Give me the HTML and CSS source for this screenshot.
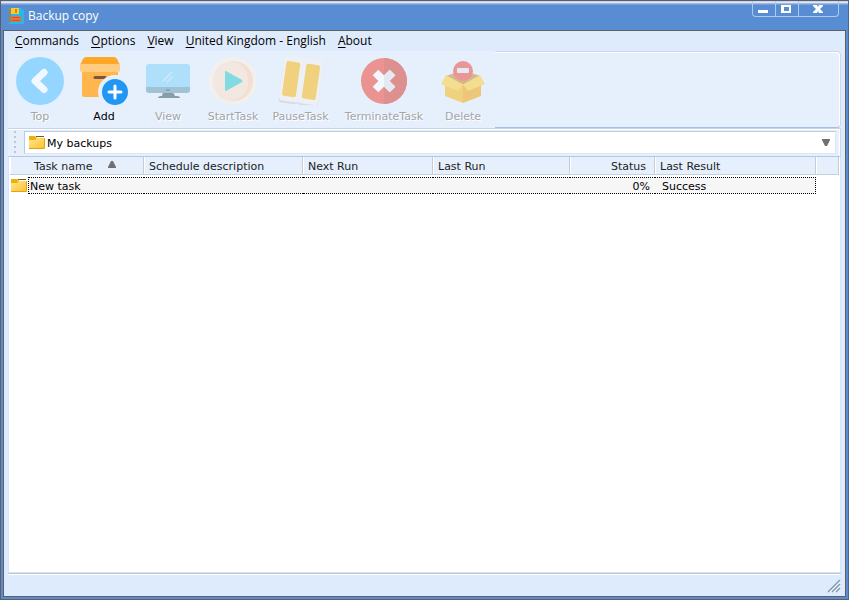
FILE: index.html
```html
<!DOCTYPE html>
<html lang="en">
<head>
<meta charset="utf-8">
<title>Backup copy</title>
<link rel="stylesheet" href="styles.css">
</head>
<body>
<div class="window">
  <header class="titlebar">
    <svg class="app-icon" viewBox="0 0 16 16" aria-hidden="true">
      <path fill="#27b9ee" d="M0 0h13l3 3v13H1l-1-1z"/>
      <path fill="#7b8b8c" d="M0 0h3v15H0z"/>
      <path fill="#ffca28" d="M3 0h8v6H3z"/>
      <path fill="#d18b1b" d="M7 1h2v4H7z"/>
      <path fill="#e8743b" d="M3 8h10v6H3z"/>
      <path fill="#b95d43" d="M4 9h8v1H4zM4 12h8v1H4z"/>
    </svg>
    <h1>Backup copy</h1>
    <div class="caption-buttons">
      <button type="button" aria-label="Minimize"><svg width="12" height="12" viewBox="0 0 12 12"><path fill="#fff" d="M1 8h10v3H1z"/></svg></button>
      <button type="button" aria-label="Maximize"><svg width="12" height="12" viewBox="0 0 12 12"><path fill="#fff" fill-rule="evenodd" d="M1 3h10v8H1zM4 5v4h5V5z"/></svg></button>
      <button type="button" class="close" aria-label="Close"><svg width="12" height="12" viewBox="0 0 12 12"><path fill="#fff" d="M1 3h4l1 2 1-2h4v1L8 7l3 3v1H7L6 9l-1 2H1v-1l3-3-3-3z"/></svg></button>
    </div>
  </header>

  <main class="client">
    <nav class="menu">
      <button type="button"><u>C</u>ommands</button>
      <button type="button"><u>O</u>ptions</button>
      <button type="button"><u>V</u>iew</button>
      <button type="button"><u>U</u>nited Kingdom - English</button>
      <button type="button"><u>A</u>bout</button>
    </nav>

    <div class="toolbar-row">
      <div class="toolbar">
        <button type="button" disabled>
          <svg viewBox="0 0 48 48"><circle cx="24" cy="24" r="24" fill="#94d6ff"/><path d="M28 15.500L19 24l9 8.500" fill="none" stroke="#f2f8ff" stroke-width="7" stroke-linecap="round" stroke-linejoin="round"/></svg>
          <span>Top</span>
        </button>
        <button type="button">
          <svg viewBox="0 0 48 48"><path fill="#ffb74d" d="M2 13h36v27H4q-2 0-2-2z"/><path fill="#ffa726" d="M6 0h28q2 0 3 2l3 6H0l3-6q1-2 3-2z"/><path fill="#ffcc80" d="M0 7h40v6q0 2-2 2H2q-2 0-2-2z"/><rect x="13.500" y="19" width="13" height="3" rx="1.500" fill="#795548"/><circle cx="35" cy="35" r="17" fill="#e6f0fd"/><circle cx="35" cy="35" r="13" fill="#2196f3"/><path d="M35 29v12M29 35h12" stroke="#fff" stroke-width="3" stroke-linecap="round"/></svg>
          <span>Add</span>
        </button>
        <button type="button" disabled>
          <svg viewBox="0 0 48 48"><path fill="#879da9" d="M19 35h10l2 4h2q3 0 3 2H14q0-2 3-2h1z"/><path fill="#a1c2d5" d="M2 28h44v5q0 3-3 3H5q-3 0-3-3z"/><path fill="#afe0fb" d="M5 7h38q3 0 3 3v20H2V10q0-3 3-3z"/><path d="M19 24l9-9M23 25l5-5" stroke="#cbeafd" stroke-width="1.500" stroke-linecap="round"/><rect x="22" y="32" width="4" height="2" rx="1" fill="#83a4b8"/></svg>
          <span>View</span>
        </button>
        <button type="button" disabled>
          <svg viewBox="0 0 48 48"><circle cx="24" cy="24" r="24" fill="#f1f0ef"/><circle cx="24" cy="24" r="20" fill="#f2dfce"/><path fill="#f2e8e1" d="M21 4.500a19.700 19.700 0 0 0 0 39q18-2 18-19.500t-18-19.500z"/><path fill="#82dae3" d="M16 15q0-1 1-1l16 9q1 1 0 2l-16 9q-1 0-1-1z"/></svg>
          <span>StartTask</span>
        </button>
        <button type="button" disabled>
          <svg viewBox="0 0 48 48"><g transform="rotate(8 24 24)"><path fill="#d4dce6" d="M7 3h13q3 0 4 2 1-2 3-2h14q3 0 3 3v38q0 4-4 4H27q-2 0-3-2-1 2-4 2H8q-4 0-4-4V6q0-3 3-3z"/><rect x="4" y="1" width="21" height="45" rx="4" fill="#edf1f6"/><rect x="23" y="1" width="21" height="45" rx="4" fill="#edf1f6"/><rect x="7" y="6" width="14" height="35" rx="2" fill="#f0d17e"/><rect x="27" y="6" width="14" height="35" rx="2" fill="#f0d17e"/></g></svg>
          <span>PauseTask</span>
        </button>
        <button type="button" disabled>
          <svg viewBox="0 0 48 48"><circle cx="24" cy="24" r="23" fill="#eb9390"/><path fill="#de908f" d="M24 1a23 23 0 0 1 0 46z"/><path d="M15.500 15.500l17 17M32.500 15.500l-17 17" stroke="#f3f8ff" stroke-width="8"/><path d="M24 24l8.500 8.500M32.500 15.500l-8.500 8.500" stroke="#e4eaf1" stroke-width="8"/><path fill="#f3f8ff" d="M18 24l6-5.700v11.400z"/></svg>
          <span>TerminateTask</span>
        </button>
        <button type="button" disabled>
          <svg viewBox="0 0 48 48"><path fill="#d7b68a" d="M7 19l17-6 17 6-17 9z"/><path fill="#f0d17e" d="M6 25l18 2v19L6 39z"/><path fill="#edc67a" d="M24 27l18-2v14l-18 7z"/><path fill="#f3dd91" d="M7 18l17 9.500-5 6.500-17-7zM41 18l-17 9.500 5 6.500 17-7z"/><circle cx="24" cy="14" r="10" fill="#e99698"/><rect x="18" y="11" width="12" height="5" rx="1" fill="#e5eaf2"/></svg>
          <span>Delete</span>
        </button>
      </div>
      <div class="toolbar-rest"></div>
    </div>

    <div class="location">
      <span class="grip"></span>
      <label class="combo">
        <svg class="folder" viewBox="0 0 18 16"><use href="#folder"/></svg>
        <select aria-label="Backup folder"><option>My backups</option></select>
        <svg class="arrow" width="8" height="8" viewBox="0 0 8 8"><path fill="#707070" d="M0 0h8v1L5 7H3L0 1z"/></svg>
      </label>
    </div>

    <section class="list">
      <table>
        <colgroup><col class="c-name"><col class="c-desc"><col class="c-next"><col class="c-last"><col class="c-status"><col class="c-result"><col></colgroup>
        <thead>
          <tr><th class="name">Task name <svg class="sort" width="8" height="8" viewBox="0 0 8 8"><path fill="#707070" d="M3 0h2l3 6v1H0V6z"/></svg></th><th>Schedule description</th><th>Next Run</th><th>Last Run</th><th class="status">Status</th><th>Last Result</th><th></th></tr>
        </thead>
        <tbody>
          <tr><td class="name"><div><svg class="folder" viewBox="0 0 18 16"><use href="#folder"/></svg><span>New task</span></div></td><td></td><td></td><td></td><td class="status">0%</td><td class="result">Success</td><td class="blank"></td></tr>
        </tbody>
      </table>
    </section>

    <footer class="statusbar">
      <svg width="14" height="14" viewBox="0 0 14 14"><path d="M1 13L13 1M5 13l8-8M9 13l4-4" stroke="#7f9bb9" stroke-width="1.500"/><path d="M3 13L13 3M7 13l6-6" stroke="#fff"/></svg>
    </footer>
  </main>
</div>

<svg class="defs" aria-hidden="true">
  <defs>
    <linearGradient id="gold" x1="0" y1="0" x2="1" y2="1"><stop offset="0" stop-color="#ffe695"/><stop offset="1" stop-color="#ffc328"/></linearGradient>
    <g id="folder"><path fill="#eeb00b" d="M1 1h6l2 2h8v10H1z"/><path d="M8 1.500h8" stroke="#765d13"/><path fill="url(#gold)" d="M1 5h6l2-2h8v10H1z"/><path d="M1 13.500h15.500V3" fill="none" stroke="#e0a41c"/></g>
  </defs>
</svg>
</body>
</html>
```

FILE: styles.css
```css
* { box-sizing: border-box; }

body {
  margin: 0;
  font: 11px/16px "DejaVu Sans", Verdana, sans-serif;
  color: #000;
}

button, select {
  margin: 0;
  padding: 0;
  border: 0;
  background: none;
  font: inherit;
  color: inherit;
}

svg { flex: none; }

.defs { position: absolute; width: 0; height: 0; }

.window {
  display: flex;
  flex-direction: column;
  height: 100vh;
  padding: 0 2px 2px;
  border: 1px solid #5e5e63;
  border-right-color: #47689a;
  background: #588dd3;
}

.titlebar {
  display: flex;
  align-items: center;
  gap: 4px;
  height: 29px;
  margin: 0 -2px;
  padding-left: 7px;
  background: linear-gradient(#c6d5f0 0 1px, #e1e7f7 1px 2px, #9fb8e4 2px 3px, #789fda 3px 4px, #588dd3 4px);
}

.app-icon { width: 16px; height: 16px; }

.titlebar h1 {
  flex: 1;
  margin: 0;
  font: 12px/16px "Open Sans", "Segoe UI", sans-serif;
  color: #fff;
}

.caption-buttons {
  display: flex;
  align-self: flex-start;
  margin-right: 9px;
  border: 1px solid #a9cdf2;
  border-top: 0;
  border-radius: 0 0 4px 4px;
}

.caption-buttons button {
  display: flex;
  justify-content: center;
  width: 23px;
  height: 15px;
  padding: 1px 2px 0 0;
  border-right: 1px solid #a9cdf2;
}

.caption-buttons .close { width: 39px; border: 0; }

.client {
  display: flex;
  flex: 1;
  flex-direction: column;
  min-height: 0;
  padding: 0 4px;
  border: 1px solid #5e5e63;
  background: #deebfc;
}

.menu {
  display: flex;
  gap: 12px;
  height: 20px;
  padding-left: 7px;
  font: 12px/20px "Open Sans", "Segoe UI", sans-serif;
}

.menu u { text-underline-offset: 2px; }

.toolbar-row { display: flex; height: 77px; background: #e6f0fd; }

.toolbar { display: grid; grid-template-columns: 64px 64px 64px 66px 69px 98px 60px; padding-right: 2px; }

.toolbar button {
  display: flex;
  flex-direction: column;
  align-items: center;
  gap: 4px;
  padding-top: 6px;
}

.toolbar button:disabled { color: #a5a5a5; text-shadow: 1px 1px #fff; }

.toolbar svg { width: 48px; height: 48px; }

.toolbar-rest {
  flex: 1;
  border: 1px solid #cbd8e9;
  border-left: 0;
  border-bottom: 1px solid #a9bfde;
  border-radius: 0 4px 4px 0;
  box-shadow: inset -1px 1px #fff;
}

.location {
  display: flex;
  align-items: center;
  gap: 8px;
  height: 28px;
  padding: 0 4px 0 6px;
  border-top: 1px solid #cbd5e5;
  border-right: 1px solid #cbd8e9;
  background: #e6f0fd;
  box-shadow: inset -1px 1px #fff;
}

.grip { width: 2px; height: 24px; background: repeating-linear-gradient(#bcc5d1 0 2px, transparent 2px 5px); }

.combo {
  display: flex;
  flex: 1;
  align-items: center;
  height: 23px;
  padding: 0 5px 0 3px;
  border: 1px solid #b8cce8;
  border-bottom-color: #dce7f7;
  border-right-color: #dce7f7;
  background: #fff;
}

.combo select { flex: 1; appearance: none; height: 21px; padding: 3px 0 0 1px; }

.folder { width: 18px; height: 16px; }

.list {
  flex: 1;
  min-height: 0;
  padding: 0 1px;
  border: 1px solid #d9e5f5;
  border-top-color: #b5c8e3;
  background: #fff;
}

table { width: 100%; table-layout: fixed; border-spacing: 0; }

.c-name { width: 134px; }
.c-desc { width: 159px; }
.c-next { width: 130px; }
.c-last { width: 137px; }
.c-status { width: 85px; }
.c-result { width: 161px; }

th {
  height: 18px;
  padding: 3px 5px 0;
  border-right: 1px solid #c7ccd4;
  border-bottom: 1px solid #c7d0dd;
  background: #e6f0fd;
  box-shadow: inset 1px 0 #fff;
  font-weight: normal;
  line-height: 14px;
  text-align: left;
  white-space: nowrap;
  color: #222;
}

th.name { padding-left: 24px; }
th.status { padding-right: 8px; text-align: right; }
.sort { margin-left: 12px; vertical-align: 1px; }

td {
  height: 17px;
  padding: 0;
  border: 0 dotted #000;
  border-width: 1px 0;
  background: #f6f6f6;
}

tbody::before { content: ""; display: table-row; height: 2px; }
td.name { border: 0; background: none; }
td.name div { display: flex; align-items: center; }
td.name span { flex: 1; height: 17px; padding: 2px 0 0 1px; border: 1px dotted #000; border-right: 0; background: #f6f6f6; line-height: 13px; }
td.status { padding: 2px 5px 0 0; text-align: right; }
td.status, td.result { line-height: 13px; }
td.result { padding: 2px 0 0 7px; border-right-width: 1px; }
td.blank { border: 0; background: none; }

.statusbar {
  display: flex;
  align-items: flex-end;
  justify-content: flex-end;
  height: 23px;
  padding-bottom: 3px;
  border-top: 1px solid #b9c5d6;
  box-shadow: inset 0 1px #fff;
}
```
